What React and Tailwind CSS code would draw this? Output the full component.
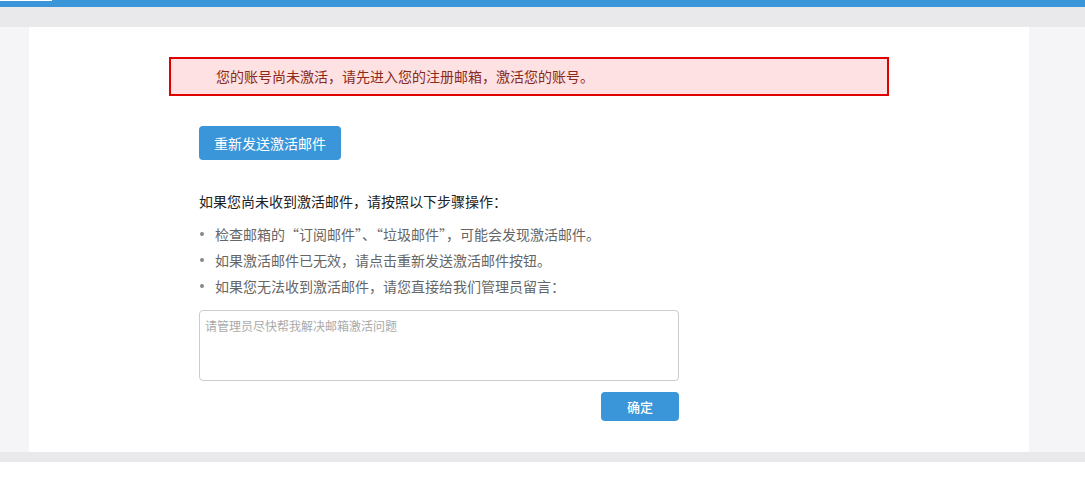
export default function App() {
  const font = { fontFamily: '"Noto Sans CJK SC", "Noto Sans", sans-serif' };
  const items = [
    "检查邮箱的“订阅邮件”、“垃圾邮件”，可能会发现激活邮件。",
    "如果激活邮件已无效，请点击重新发送激活邮件按钮。",
    "如果您无法收到激活邮件，请您直接给我们管理员留言：",
  ];
  return (
    <div className="min-h-screen bg-white font-['Noto_Sans_CJK_SC',sans-serif]">
      <div className="relative h-[7px] bg-[#3a96d8]">
        <div className="absolute left-0 top-0 h-[1px] w-[52px] bg-white" />
      </div>
      <div className="h-[20px] bg-[#e9e9ec]" />
      <div className="flex h-[425px] bg-[#f5f5f7]">
        <div className="ml-[29px] w-[1000px] bg-white pt-[30px]">
          <div className="mx-[140px] flex h-[39px] items-center border-2 border-[#e00000] bg-[#fde1e3] pl-[45px] text-[14px] text-[#8b2a1a]">
            您的账号尚未激活，请先进入您的注册邮箱，激活您的账号。
          </div>
          <div className="pl-[170px]">
            <button className="mt-[30px] flex h-[34px] w-[142px] items-center justify-center rounded-[4px] bg-[#3a96d8] text-[14px] text-white">
              重新发送激活邮件
            </button>
            <div className="mt-[31px] text-[14px] leading-[20px] text-[#222]">
              如果您尚未收到激活邮件，请按照以下步骤操作：
            </div>
            <ul className="mt-[10px]">
              {items.map((t) => (
                <li key={t} className="flex items-center text-[14px] leading-[26px] text-[#666]">
                  <span className="ml-[1px] mr-[11px] h-[4px] w-[4px] rounded-full bg-[#888]" />
                  {t}
                </li>
              ))}
            </ul>
            <div className="w-[480px]">
              <textarea
                placeholder="请管理员尽快帮我解决邮箱激活问题"
                className="mt-[11px] block h-[71px] w-[480px] resize-none rounded-[4px] border border-[#ccc] px-[5px] py-[6px] text-[12px] leading-[18px] text-[#333] placeholder:text-[#aaa] outline-none"
              />
              <div className="mt-[11px] flex justify-end">
                <button className="flex h-[29px] w-[78px] items-center justify-center rounded-[4px] bg-[#3a96d8] text-[13px] font-medium text-white">
                  确定
                </button>
              </div>
            </div>
          </div>
        </div>
      </div>
      <div className="h-[10px] bg-[#e9e9ec]" />
    </div>
  );
}
